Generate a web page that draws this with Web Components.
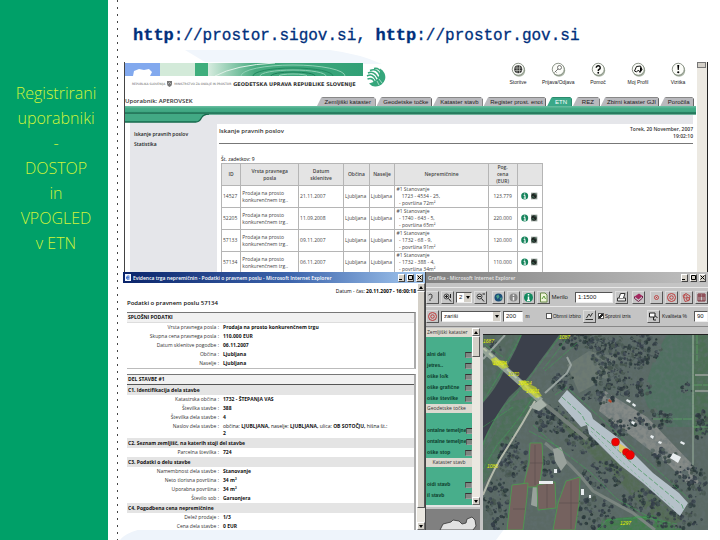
<!DOCTYPE html>
<html lang="sl">
<head>
<meta charset="utf-8">
<title>Prostor – dostop in vpogled v ETN</title>
<style>
body { margin: 0; background: #fff; font-family: "Open Sans", "Noto Sans", sans-serif; }
</style>
</head>
<body>
<slide-page>
  <side-note slot="side">
    <div>Registrirani</div><div>uporabniki</div><div>-</div><div>DOSTOP</div><div>in</div><div>VPOGLED</div><div>v ETN</div>
  </side-note>
  <url-title slot="title"><b>http</b>://prostor.sigov.si, <b>http</b>://prostor.gov.si</url-title>
  <portal-window slot="portal"></portal-window>
  <record-window slot="left"></record-window>
  <map-window slot="right"></map-window>
</slide-page>

<script>
const define = (name, html, after) => {
  const t = document.createElement('template');
  t.innerHTML = html;
  customElements.define(name, class extends HTMLElement {
    constructor() {
      super();
      this.attachShadow({ mode: 'open' }).append(t.content.cloneNode(true));
      if (after) after(this.shadowRoot, this);
    }
  });
};

define('slide-page', `
<style>
:host { display: grid; grid-template-columns: 15% 15px minmax(0, 1fr); min-height: 100vh; position: relative; overflow: hidden; box-sizing: border-box; }
.back { position: absolute; inset: 0; width: 100%; height: 100%; }
.side { background: #00a068; position: relative; }
.dots { position: relative; background: repeating-linear-gradient(to bottom, #444 0 2px, transparent 2px 7px) 9px 0 / 1px 100% no-repeat; }
main { position: relative; display: grid; height: 100vh; box-sizing: border-box; padding: 0 0 10px; grid-template-rows: 62px 210px minmax(0, 1fr); }
.row { display: grid; grid-template-columns: 303px minmax(0, 1fr); margin-right: 12px; min-height: 0; }
</style>
<svg class="back" viewBox="0 0 720 540" preserveAspectRatio="none" aria-hidden="true">
  <path d="M185 50 L330 50 Q360 54 382 64 L300 64 L205 62 Z" fill="#f1f6fc"/>
  <path d="M120 540 Q126 532 146 528 L505 528 L496 540 Z" fill="#eef4fb"/>
</svg>
<div class="side"><slot name="side"></slot></div>
<div class="dots"></div>
<main>
  <slot name="title"></slot>
  <slot name="portal"></slot>
  <div class="row"><slot name="left"></slot><slot name="right"></slot></div>
</main>`);

define('side-note', `
<style>
:host { display: block; padding: 81px 4px 0 8px; text-align: center; font: 300 16px/25px "Open Sans", sans-serif; color: #d0f53a; }
</style><slot></slot>`);

define('url-title', `
<style>
:host { display: block; padding: 25px 0 0 10px; font: 16px/22px "Liberation Mono", monospace; color: #00307c; white-space: nowrap; -webkit-text-stroke: 0.3px #00307c; }
::slotted(b) { font-size: 17px; }
</style><slot></slot>`);

/* ---------- portal ---------- */
define('nav-link', `
<style>
:host { display: block; width: 32px; }
a { display: grid; justify-items: center; gap: 2px; color: #222; text-decoration: none; font: 5px/7px "Liberation Sans", sans-serif; }
svg { width: 15px; height: 15px; }
</style>
<a href="#"><svg viewBox="0 0 30 30"><circle cx="16" cy="17" r="12.500" fill="#aab5a5"/><circle cx="14.500" cy="14.500" r="12" fill="#fbfcf8" stroke="#6a7465" stroke-width="1.500"/><g></g></svg><span><slot></slot></span></a>`,
(root, host) => {
  root.querySelector('g').innerHTML = {
    globe: '<circle cx="14.500" cy="14.500" r="8" fill="#333"/><path d="M8 12h13M8 17h13M12 7v15M17 7v15" stroke="#cdd2c8" stroke-width="1.200"/>',
    key: '<circle cx="17" cy="11" r="4" fill="none" stroke="#555" stroke-width="1.600"/><path d="M14 14L7 21M9 19l2 2" stroke="#555" stroke-width="1.600"/>',
    help: '<path d="M10.500 11.500a4 4 0 1 1 5.500 3.500q-1.500 .8-1.500 3" fill="none" stroke="#111" stroke-width="3"/><circle cx="14.500" cy="21.500" r="1.800"/>',
    profile: '<path d="M7 18l4-9 8-1 3 7-4 6-3-5-4 4z" fill="none" stroke="#111" stroke-width="2"/><path d="M18 9l4 6-4 5z"/>',
    alert: '<path d="M12.500 6h4l-1 10h-2z"/><circle cx="14.500" cy="20.500" r="2.200"/>'
  }[host.getAttribute('icon')];
});

define('portal-tab', `
<style>
:host { display: block; flex: var(--w) 1 0; min-width: 0; }
a { display: block; height: 9px; background: #b9b9bd; color: #222; clip-path: polygon(0 100%, 4px 1px, 6px 0, calc(100% - 2px) 0, 100% 2px, 100% 100%); text-align: center; text-decoration: none; font: 6px/9px "Liberation Sans", sans-serif; border-right: 1px solid #666; border-top: 1px solid #888; box-sizing: border-box; padding-left: 4px; white-space: nowrap; }
:host([current]) a { background: #3aa888; color: #fff; border-color: #2c8a6c; }
</style><a href="#"><slot></slot></a>`);

define('info-mark', `
<style>:host { display: inline-block; } svg { width: 17px; height: 8px; display: block; }</style>
<svg viewBox="0 0 51 24"><circle cx="11" cy="12" r="10.500" fill="#16845c"/><path d="M11 4.500v3M8 10h4v8M8 18.500h7" stroke="#fff" stroke-width="3" fill="none"/><path d="M30 2h19v20H30z" fill="#8d9a92"/><circle cx="39" cy="12" r="8" fill="#1d2421"/><path d="M32 16l5-3 3 5M40 6l5 3" stroke="#4c8a6c" stroke-width="2" fill="none"/></svg>`);

define('portal-window', `
<style>
:host { display: flex; margin: 0 12px 0 1px; border-left: 1px solid #444; border-right: 1px solid #222; overflow: hidden; min-height: 0; box-sizing: border-box; }
.page { flex: 1; min-width: 0; }
.bar { width: 10px; background: #ece9e2; }
.bar button { display: block; width: 9px; height: 6px; padding: 0; border: 1px solid #777; background: #d4d0c8; box-sizing: border-box; }
header { display: flex; height: 35px; padding-right: 3px; }
.mast { width: 241px; flex: none; }
.banner { display: block; padding-top: 1px; }
.agency { display: flex; align-items: center; gap: 2px; padding: 5px 0 0 7px; font: 3px/6px "DejaVu Sans", sans-serif; color: #666; white-space: nowrap; }
.agency b { font-size: 5px; color: #333; }
.nav { display: flex; gap: 8px; margin-left: auto; }
.user { display: flex; align-items: flex-end; height: 9px; font: 600 6px/10px "Open Sans", sans-serif; color: #333; }
.user span { width: 192px; flex: none; }
nav { display: flex; flex: 1; gap: 1px; margin-right: 3px; }
.green { height: 9px; margin-right: 1px; background: linear-gradient(#6cbfa3, #42a984 30%, #42a984 60%, #14694c 80%, #8fcab6); }
.body { display: grid; grid-template-columns: 87px minmax(0, 1fr); background: #e5e6ea; margin-right: 4px; border-left: 5px solid #fff; }
.menu { display: grid; align-content: start; padding: 14px 0 90px 4px; font: 600 5px/10px "Open Sans", sans-serif; }
.menu a { color: #222; text-decoration: none; }
.curve { position: absolute; width: 84px; height: 9px; margin: -1px 0 0 0; }
.content { background: #fff; margin-top: 9px; padding: 2px 0 0 2px; height: 150px; }
.head { display: flex; justify-content: space-between; height: 17px; border-bottom: 1px solid #777; font: 600 6px/11px "Open Sans", sans-serif; color: #333; }
.head time { text-align: right; font: 600 5px/7px "Open Sans", sans-serif; }
.count { font: 5px/7px "Open Sans", sans-serif; margin: 12px 0 0 2px; }
table { border-collapse: collapse; margin-left: 2px; table-layout: fixed; width: 68%; font: 5px/7px "Open Sans", sans-serif; color: #444; }
th, td { border: 1px solid #b5b5b5; padding: 0 1px; height: 21px; white-space: nowrap; overflow: hidden; }
th { background: #e4e4e4; font-weight: 600; }
td:nth-child(6) { white-space: pre; }
td:nth-child(7), td:nth-child(8) { text-align: center; }
</style>
<div class="page">
  <header>
    <div class="mast">
      <svg class="banner" viewBox="0 0 238 13" width="238" height="13">
        <defs><linearGradient id="g"><stop offset="0" stop-color="#d7ecdf"/><stop offset=".3" stop-color="#48ab80"/><stop offset="1" stop-color="#31a076"/></linearGradient></defs>
        <path d="M0 0h35v13H0z" fill="#82a9ee"/><path d="M8 13l1-5 5-2 5 1 5-1 3 3-2 4z" fill="#fff"/>
        <path d="M35 0h35v13H35z" fill="#d3ead9"/><path d="M70 0h13v13H70z" fill="#3fae7c"/><path d="M83 0h155v13H83z" fill="url(#g)"/>
        <g fill="none" stroke="#8fd0b4" stroke-width="1"><ellipse cx="168" cy="13" rx="52" ry="11"/><ellipse cx="168" cy="13" rx="40" ry="8" stroke="#22885f"/><ellipse cx="168" cy="13" rx="33" ry="6"/><ellipse cx="168" cy="13" rx="22" ry="4" stroke="#1c7e58"/><ellipse cx="168" cy="13" rx="14" ry="2"/><path d="M90 13Q110 2 150 0" stroke="#dff1e7"/></g>
      </svg>
      <div class="agency"><span>REPUBLIKA SLOVENIJA</span><svg width="5" height="6" viewBox="0 0 5 6"><path d="M0 0h5v3q0 2-2.500 3Q0 5 0 3z" fill="#777"/><path d="M1 3l1.500-1.500L4 3" stroke="#ddd" fill="none" stroke-width=".6"/></svg><span>MINISTRSTVO ZA OKOLJE IN PROSTOR</span><b>GEODETSKA UPRAVA REPUBLIKE SLOVENIJE</b></div>
    </div>
    <svg width="20" height="26" viewBox="0 0 20 26" aria-hidden="true"><path d="M14 6.500A9.500 9.500 0 0 1 9 24.500Q5 24 3 21.500 15 19 14 6.500z" fill="#35a67b"/><g fill="none" stroke="#35a67b" stroke-width="1.500"><path d="M2 11q6-3 10 5M1 14q6-3 9 4M1.500 17q5-2 7 3M4 8.500q7-3 10 5M8 6.500q5-1 8 5"/></g><g fill="none" stroke="#d9efe5" stroke-width=".7"><path d="M13 17l3 4M11 19l2 4"/></g></svg>
    <div class="nav"><nav-link icon="globe">Storitve</nav-link><nav-link icon="key">Prijava/Odjava</nav-link><nav-link icon="help">Pomoč</nav-link><nav-link icon="profile">Moj Profil</nav-link><nav-link icon="alert">Vizitka</nav-link></div>
  </header>
  <div class="user"><span>Uporabnik: APEROVSEK</span>
    <nav>
      <portal-tab style="--w:59">Zemljiški kataster</portal-tab><portal-tab style="--w:56">Geodetske točke</portal-tab><portal-tab style="--w:50">Kataster stavb</portal-tab><portal-tab style="--w:63">Register prost. enot</portal-tab><portal-tab current style="--w:25">ETN</portal-tab><portal-tab style="--w:27">REZ</portal-tab><portal-tab style="--w:59">Zbirni kataster GJI</portal-tab><portal-tab style="--w:34">Poročila</portal-tab>
    </nav>
  </div>
  <div class="green"></div>
  <svg class="curve" viewBox="0 0 88 9" preserveAspectRatio="none" aria-hidden="true"><path d="M0 0H88Q82 0 80 4 78 8 74 8H0z" fill="#42a984"/><path d="M0 8H74Q78 8 80 4 82 0 88 0" fill="none" stroke="#14694c" stroke-width="1.300"/></svg>
  <div class="body">
    <div class="menu"><a href="#">Iskanje pravnih poslov</a><a href="#">Statistika</a></div>
    <div class="content">
      <div class="head"><span>Iskanje pravnih poslov</span><time>Torek, 20 November, 2007<br>19:02:10</time></div>
      <div class="count">Št. zadetkov: 9</div>
      <table>
        <colgroup><col style="width:6%"><col style="width:18%"><col style="width:14%"><col style="width:8%"><col style="width:8%"><col style="width:29%"><col style="width:9%"><col style="width:8%"></colgroup>
        <thead><tr><th>ID</th><th>Vrsta pravnega<br>posla</th><th>Datum<br>sklenitve</th><th>Občina</th><th>Naselje</th><th>Nepremičnine</th><th>Pog.<br>cena<br>(EUR)</th><th></th></tr></thead>
        <tbody></tbody>
      </table>
    </div>
  </div>
</div>
<div class="bar"><button aria-label="Gor"></button></div>`,
root => {
  root.querySelector('tbody').innerHTML = [
    ['14527', '21.11.2007', '    1723 - 4534 - 25,', 72, '123.779'],
    ['52205', '11.09.2008', '  - 1740 - 643 - 5,', 65, '220.000'],
    ['57133', '09.11.2007', '  - 1732 - 68 - 9,', 91, '120.000'],
    ['57134', '06.11.2007', '  - 1732 - 388 - 4,', 34, '110.000']
  ].map(r => `<tr><td>${r[0]}</td><td>Prodaja na prosto<br>konkurenčnem trg..</td><td>${r[1]}</td><td>Ljubljana</td><td>Ljubljana</td><td>#1 Stanovanje\n${r[2]}\n  - površina ${r[3]}m²</td><td>${r[4]}</td><td><info-mark></info-mark></td></tr>`).join('');
});

/* ---------- window frame ---------- */
define('window-frame', `
<style>
:host { display: flex; flex-direction: column; min-height: 0; height: 100%; overflow: hidden; box-sizing: border-box; }
.title { display: flex; align-items: center; gap: 2px; height: 11px; padding: 0 2px; background: var(--bar); color: var(--ink, #fff); font: 600 5px/10px "Open Sans", sans-serif; box-sizing: border-box; flex: none; white-space: nowrap; }
.title span { flex: 1; }
button { width: 7px; height: 8px; padding: 0; border: 1px solid; border-color: #fff #444 #444 #fff; background: #d4d0c8; display: grid; place-items: center; box-sizing: border-box; }
button svg { width: 5px; height: 5px; }
.icon { width: 6px; height: 7px; flex: none; }
:host([plain]) .icon { display: none; }
</style>
<div class="title"><svg class="icon" viewBox="0 0 6 7"><path d="M0 0h6v7H0z" fill="#f4f7ff"/><path d="M4.500 2.200Q2 1 1.500 3.500T4.500 5M1.500 3.700h3" stroke="#2861c8" fill="none"/></svg><span><slot name="title"></slot></span>
<button aria-label="Pomanjšaj"><svg viewBox="0 0 5 5"><path d="M0 4.500h3" stroke="#000"/></svg></button><button aria-label="Povečaj"><svg viewBox="0 0 5 5"><path d="M.5.500h4v4h-4z" fill="none" stroke="#000"/></svg></button><button aria-label="Zapri"><svg viewBox="0 0 5 5"><path d="M.5.500l4 4M4.500.500l-4 4" stroke="#000"/></svg></button></div>
<slot></slot>`);

define('scroll-track', `
<style>
:host { display: flex; flex-direction: column; width: 8px; flex: none; background: #ebe8e1; }
button { height: 8px; padding: 0; border: 1px solid; border-color: #fff #666 #666 #fff; background: #d4d0c8; display: grid; place-items: center; flex: none; box-sizing: border-box; }
svg { width: 4px; height: 3px; }
.thumb { flex: 0 0 var(--thumb, 88%); background: #d4d0c8; border: 1px solid; border-color: #fff #555 #555 #fff; box-sizing: border-box; }
.gap { flex: 1; }
</style>
<button aria-label="Gor"><svg viewBox="0 0 4 3"><path d="M0 3L2 0l2 3z"/></svg></button><div class="thumb"></div><div class="gap"></div><button aria-label="Dol"><svg viewBox="0 0 4 3"><path d="M0 0l2 3 2-3z"/></svg></button>`);

/* ---------- record pop-up ---------- */
define('record-line', `
<style>
:host { display: grid; grid-template-columns: 92px minmax(0, 1fr); gap: 4px; font: 5px/7px "Open Sans", sans-serif; color: #333; padding: 1px 0; }
.l { text-align: right; } .v { font-weight: 700; color: #111; }
</style><span class="l"><slot name="label"></slot> :</span><span class="v"><slot></slot></span>`);

define('record-band', `
<style>
:host { display: block; background: #e4e4e4; padding: 1px; font: 700 5px/8px "Open Sans", sans-serif; color: #111; }
:host([top]) { background: #f1f1f1; border-bottom: 1px solid var(--rule, #ddd); line-height: 7px; }
</style><slot></slot>`);

define('record-window', `
<style>
:host { display: block; min-height: 0; background: #fff; }
window-frame { --bar: linear-gradient(to right, #0a246a, #3c64ac 55%, #a6caf0); border-right: 1px solid #444; }
.wrap { display: flex; flex: 1; min-height: 0; }
.doc { flex: 1; min-width: 0; padding: 5px 1px 0 4px; overflow: hidden; }
.date { text-align: right; font: 5px/7px "Open Sans", sans-serif; }
h1 { margin: 4px 0; font: 600 6px/9px "Open Sans", sans-serif; color: #111; }
section { border-top: 1px solid #777; border-right: 2px solid #aaa; }
section:first-of-type { border-bottom: 1px solid #bbb; margin-bottom: 5px; }
i { font-style: normal; font-weight: 400; }
</style>
<window-frame><span slot="title">Evidenca trga nepremičnin - Podatki o pravnem poslu - Microsoft Internet Explorer</span>
<div class="wrap"><div class="doc">
  <div class="date">Datum - čas: <b>20.11.2007 - 16:00:18</b></div>
  <h1>Podatki o pravnem poslu 57134</h1>
  <section>
    <record-band top>SPLOŠNI PODATKI</record-band>
    <record-line><span slot="label">Vrsta pravnega posla</span>Prodaja na prosto konkurenčnem trgu</record-line>
    <record-line><span slot="label">Skupna cena pravnega posla</span>110.000 EUR</record-line>
    <record-line><span slot="label">Datum sklenitve pogodbe</span>06.11.2007</record-line>
    <record-line><span slot="label">Občina</span>Ljubljana</record-line>
    <record-line><span slot="label">Naselje</span>Ljubljana</record-line>
  </section>
  <section>
    <record-band top style="--rule:#555">DEL STAVBE #1</record-band>
    <record-band>C1. Identifikacija dela stavbe</record-band>
    <record-line><span slot="label">Katastrska občina</span>1732 - ŠTEPANJA VAS</record-line>
    <record-line><span slot="label">Številka stavbe</span>388</record-line>
    <record-line><span slot="label">Številka dela stavbe</span>4</record-line>
    <record-line><span slot="label">Naslov dela stavbe</span><i>občina:</i> LJUBLJANA, <i>naselje:</i> LJUBLJANA, <i>ulica:</i> OB SOTOČJU, <i>hišna št.:</i><br>2</record-line>
    <record-band>C2. Seznam zemljišč, na katerih stoji del stavbe</record-band>
    <record-line><span slot="label">Parcelna številka</span>724</record-line>
    <record-band>C3. Podatki o delu stavbe</record-band>
    <record-line><span slot="label">Namembnost dela stavbe</span>Stanovanje</record-line>
    <record-line><span slot="label">Neto tlorisna površina</span>34 m²</record-line>
    <record-line><span slot="label">Uporabna površina</span>34 m²</record-line>
    <record-line><span slot="label">Število sob</span>Garsonjera</record-line>
    <record-band>C4. Pogodbena cena nepremičnine</record-band>
    <record-line><span slot="label">Delež prodaje</span>1/3</record-line>
    <record-line><span slot="label">Cena dela stavbe</span>0 EUR</record-line>
  </section>
</div><scroll-track></scroll-track></div>
</window-frame>`);

/* ---------- map window ---------- */
define('tool-button', `
<style>
:host { display: block; flex: none; }
button { width: 13px; height: 13px; padding: 0; border: 1px solid; border-color: #dcdcdc #555 #555 #dcdcdc; background: #c6c6c6; display: grid; place-items: center; box-sizing: border-box; }
svg { width: 11px; height: 11px; }
</style><button><svg viewBox="0 0 22 22" fill="none" stroke-width="2"></svg></button>`,
(root, host) => {
  const k = host.getAttribute('icon');
  root.querySelector('button').setAttribute('aria-label', k);
  root.querySelector('svg').innerHTML = {
    zoomin: '<circle cx="9" cy="9" r="5" stroke="#444"/><path d="M13 13l5 6M9 6v6M6 9h6M17 4v8" stroke="#222"/>',
    zoomout: '<circle cx="9" cy="9" r="5" stroke="#444"/><path d="M13 13l5 6M6 9h6M15 4h5" stroke="#222"/>',
    world: '<circle cx="11" cy="11" r="8" fill="#1c4f7a"/><path d="M6 8l5-3 2 5-4 4zM13 12l5-1-2 6z" fill="#4aa08a"/>',
    infoGrey: '<circle cx="11" cy="11" r="8" fill="#868686"/><path d="M11 5v3M11 10v7" stroke="#eee" stroke-width="3"/>',
    info: '<circle cx="11" cy="11" r="9" fill="#128a5f"/><path d="M11 4v3M11 9v8M8 17h6" stroke="#fff" stroke-width="3"/>',
    page: '<path d="M5 2h9l4 4v14H5z" fill="#eef5d8" stroke="#6c8c4a"/><path d="M8 14l4-6 3 6" stroke="#5a9a3a"/>',
    print: '<path d="M3 12h16v6H3z" fill="#eee" stroke="#333"/><path d="M6 12l3-9h9l-3 9" fill="#fff" stroke="#333"/>',
    book: '<path d="M3 9l9-6 7 5-8 7z" fill="#a3285f"/><path d="M3 9v4l8 6 8-7V8" stroke="#74204a"/>',
    dot: '<circle cx="11" cy="11" r="4" stroke="#c04848"/><circle cx="11" cy="11" r="1" fill="#c00"/>',
    target: '<circle cx="11" cy="11" r="8" stroke="#c03a3a"/><circle cx="11" cy="11" r="3.500" stroke="#c03a3a"/>',
    lasso: '<path d="M4 7l6-4 8 5-2 9-8 2z" stroke="#b94b4b"/><circle cx="9" cy="9" r="3" stroke="#b94b4b"/><circle cx="14" cy="14" r="3" stroke="#b94b4b"/>',
    frame: '<path d="M4 4h14v14H4zM4 8h14M8 4v14M14 4v14" stroke="#7d2c36"/>',
    measure: '<path d="M3 17h15M5 14l5-8 3 5 4-7" stroke="#333"/>',
    apply: '<path d="M3 4h11v8H3z" fill="#fff" stroke="#222"/><path d="M11 12v6h5M14 9l5 5" stroke="#222"/>',
    hand: '<path d="M3 6q6-4 7 1t-4 8v3" stroke="#333"/>'
  }[k];
});

define('layer-group', `
<style>
:host { display: block; background: #48ae8b; font: 700 5px/11px "Liberation Sans", sans-serif; color: #0c3a2a; }
h2 { margin: 0; padding: 0 1px; background: #dcd9d0; color: #333; font: 5px/9px "Open Sans", sans-serif; white-space: nowrap; text-align: var(--align, left); }
.rows { padding: 12px 0 0 1px; }
label { display: flex; justify-content: space-between; align-items: center; white-space: nowrap; }
input { appearance: none; margin: 0; width: 7px; height: 6px; background: #7d8782; border: 1px solid; border-color: #333 #999 #999 #555; box-sizing: border-box; flex: none; }
</style><h2></h2><div class="rows"></div>`,
(root, host) => {
  root.querySelector('h2').textContent = host.getAttribute('heading');
  root.querySelector('.rows').innerHTML = host.getAttribute('items').split('|').map(t => `<label><span>${t}</span><input type="checkbox"></label>`).join('');
});

define('aerial-map', `
<style>
:host { display: block; min-width: 0; min-height: 0; overflow: hidden; border-top: 1px solid #222; }
svg { display: block; width: 100%; height: 100%; }
text { font: italic 5px "Liberation Sans", sans-serif; fill: #e8f000; }
</style>
<svg viewBox="0 0 225 195" preserveAspectRatio="xMinYMin slice" role="img" aria-label="Letalski posnetek">
  <defs>
    <filter id="n" x="0" y="0" width="100%" height="100%"><feTurbulence type="fractalNoise" baseFrequency=".22" numOctaves="3" seed="4"/><feColorMatrix values="0 0 0 0 .12  0 0 0 0 .16  0 0 0 0 .17  1.300 0 0 0 -.5"/></filter>
    <filter id="s"><feGaussianBlur stdDeviation=".5"/></filter>
  </defs>
  <path d="M0 0h225v195H0z" fill="#5a6964"/>
  <path d="M0 0H80L60 22 30 66 0 118z" fill="#4f6e5c"/>
  <path d="M0 0H34L16 34 0 50z" fill="#55695f"/>
  <path d="M56 60Q40 88 26 110 10 134 0 150V120L30 66z" fill="#4c6f58"/>
  <path d="M160 60L172 20 184 0H210V92H184L165 72z" fill="#4f7060"/>
  <path d="M211 0h14v100h-14z" fill="#4c6f54"/>
  <path d="M84 30l22-14 28 6-8 20-30 16z" fill="#6d7a72"/>
  <path d="M122 56l42 26 44 46 8 20-10 2-20-20-70-54z" fill="#858a87"/>
  <path d="M75 74l125 112-20 6-100-100z" fill="#536a54"/>
  <path d="M120 184l50-4 30 15H114z" fill="#437c4c"/>
  <g id="trees" filter="url(#s)"></g>
  <path d="M0 0h225v195H0z" filter="url(#n)"/>
  <path d="M39 0H76Q66 14 56 27 44 46 26 62 10 84 0 106V68Q14 52 20 38 32 18 39 0z" fill="#3b404b"/>
  <path d="M22 0L0 24M62 58L84 38 88 30 84 22" stroke="#98a39f" stroke-width="2" fill="none"/>
  <path d="M58 66Q80 84 104 104" stroke="#747e79" stroke-width="4" fill="none"/>
  <path d="M0 14L58 66" stroke="#93a296" stroke-width="6"/>
  <path d="M0 13L56 63" stroke="#b8c4a8" stroke-width="2" stroke-dasharray="5 3"/>
  <path d="M52 66Q40 88 26 110 10 134 0 160" stroke="#b5baac" stroke-width="2" fill="none"/>
  <path d="M46 72l12-8 6 6-8 6z" fill="#a9b3aa"/>
  <path d="M62 108Q90 130 110 156L150 178 172 195" stroke="#7b8580" stroke-width="3" fill="none"/>
  <path d="M70 114l8-2 6 16-6 8-6-10zM50 150h6l-2 22-6-2z" fill="#98a19b"/>
  <g stroke="#3ea653" stroke-width=".6" fill="none" stroke-dasharray="9 1" opacity=".85">
    <path d="M38 0Q28 22 0 66M78 0Q62 22 50 38 34 60 22 70 8 88 0 110M86 0Q72 20 60 34M50 62Q34 88 14 110L0 134M94 8L62 36M50 90L74 112 106 136 134 164 180 190M46 96l30 16M0 92L30 72M0 8l20 14M134 195l20-14 40 8M114 195l10-10 40-3"/>
    <path d="M86 54L206 164M72 60L84 52"/>
    <path d="M210 0V92H225M210 50H225M170 84H210M214 0v26" stroke="#62c06a"/>
  </g>
  <g fill="#75625f" stroke="#46a94c" stroke-width=".7">
    <path d="M47 108H59L60 128 56 152H40L46 128z"/><path d="M29 150l16-2-1 14-4 33H24z"/><path d="M54 150l18-3 1 26-18 2z"/><path d="M83 146l14-4-1 26-4 27H70L75 168z"/>
  </g>
  <g stroke="#584a4a" stroke-width=".7" opacity=".8"><path d="M47 128h13M52 110v40M30 174h12M64 149v24M76 168h20M88 146v48"/></g>
  <path d="M84 55L75 66 98 92 104 90 106 99 137 130 160 148 197 181 205 168 196 158 170 138 134 102 110 84 108 78z" fill="#b5c1c9"/>
  <path d="M79 62l20 18 4 8 24 20 26 24 46 38 2 6" stroke="#4c9a63" stroke-width=".8" fill="none" stroke-dasharray="5 2"/>
  <path d="M108 96l28 28 56 50" stroke="#74b58a" stroke-width=".6" fill="none" stroke-dasharray="3 2"/>
  <path d="M210 0V130" stroke="#91a695" stroke-width="2" opacity=".6"/>
  <path d="M212 40h13M212 56h13" stroke="#9aa39c" stroke-width="1.500"/>
  <g fill="#e9eef0"><path d="M144 64l4 2-1 2-4-2zM150 68l3 2-1 2-3-2zM149 86l3 1-1 3-3-2zM168 100l3 1-1 3-3-2zM176 106l3 1-1 2-3-1zM190 118l8 4-3 6-8-5zM198 106l4 2-1 2-4-2zM71 134h3v4h-3zM56 146h14v3H56zM98 154h3v6h-3zM106 160h2v3h-2z"/></g>
  <path d="M126 64l3 2-1 2-3-2z" fill="#b7492f"/>
  <path d="M8 24l5-2 3 3 6 1 4 6-6 2-5-3-5-1zM36 46l6-1 4 4 7 3 6 9-6 2-7-6-6-2z" fill="#d4e020" opacity=".6"/>
  <text x="0" y="8">1687</text><text x="10" y="30">10804</text><text x="25" y="41">1070</text><text x="35" y="50">10824</text><text x="43" y="58">10911</text><text x="76" y="4">1087</text><text x="4" y="133">1086</text><text x="137" y="190">1297</text>
  <path d="M136 108l12 8-3 6-9-6z" fill="#e6c84a" opacity=".8"/>
  <g fill="#f00000" stroke="#9c1a10" stroke-width=".5"><circle cx="132.500" cy="107" r="4"/><circle cx="143" cy="117" r="3.500"/><circle cx="147" cy="120" r="4.500"/></g>
</svg>`,
root => {
  let s = 7;
  const rnd = () => (s = (s * 16807) % 2147483647) / 2147483647;
  const zones = [[104,8,30,9,110],[138,20,30,18,200],[160,14,18,16,80],[124,44,14,10,50],[148,52,24,10,80],[116,62,16,8,40],[168,84,22,10,60],[205,54,6,7,16],[218,90,7,16,40],[134,92,16,10,40],[178,122,16,8,40],[206,150,18,22,110],[80,48,12,10,50],[70,84,22,14,100],[98,106,16,12,60],[30,124,14,24,110],[14,168,12,26,90],[120,140,20,14,70],[112,178,24,16,80],[66,130,14,12,50],[160,166,22,12,80],[8,14,10,8,20],[190,184,30,10,70]];
  let out = '';
  for (const [x, y, rx, ry, n] of zones) for (let i = 0; i < n; i++) {
    const a = rnd() * 6.283, r = Math.sqrt(rnd());
    out += `<circle cx="${(x + rx * r * Math.cos(a)).toFixed(1)}" cy="${(y + ry * r * Math.sin(a)).toFixed(1)}" r="${(0.6 + rnd() * 1.8).toFixed(1)}" fill="${['#2f3a40', '#363f4a', '#2c3a3a', '#46564f', '#5b6a66'][Math.floor(rnd() * 5)]}"/>`;
  }
  root.querySelector('#trees').innerHTML = out;
});

define('map-window', `
<style>
:host { display: block; min-width: 0; min-height: 0; background: #c4c4c4; }
window-frame { --bar: linear-gradient(to right, #808080, #c0c0c0); --ink: #e6e6e6; }
.tools { display: flex; align-items: center; height: 19px; flex: none; gap: 2px; overflow: hidden; border-top: 1px solid #e8e8e8; box-sizing: border-box; font: 5px/8px "Liberation Sans", sans-serif; color: #222; white-space: nowrap; }
.first { margin-top: 4px; }
.sp { flex: 1; }
.cap { margin-right: 6px; }
.wide { font-size: 6px; }
input:not([type=checkbox]), select { font: 6px/9px "Liberation Sans", sans-serif; height: 11px; padding: 0 2px; border: 1px solid; border-color: #555 #eee #eee #555; background: #fff; box-sizing: border-box; border-radius: 0; color: #222; }
select { appearance: none; background: linear-gradient(#d4d0c8, #d4d0c8) right / 7px 100% no-repeat, #fff; }
.drop { display: flex; position: relative; }
.drop svg { position: absolute; right: 2px; top: 4px; width: 4px; height: 3px; }
input[type=checkbox] { appearance: none; width: 6px; height: 6px; margin: 0; border: 1px solid #555; background: #fff; box-sizing: border-box; }
input[type=checkbox]:checked { background: linear-gradient(135deg, #fff 35%, #222 35% 65%, #fff 65%); }
label { display: flex; align-items: center; gap: 1px; }
.wrap { display: grid; grid-template-columns: 54px minmax(0, 1fr); gap: 3px; flex: 1; min-height: 0; border-top: 1px solid #888; margin-top: 1px; padding-top: 1px; }
.left { display: flex; flex-direction: column; min-height: 0; }
.list { display: flex; flex: 1; min-height: 0; overflow: hidden; border-bottom: 2px solid #e4e4e4; }
.groups { flex: 1; min-width: 0; background: #48ae8b; }
.over { flex: none; height: 21px; margin-top: 2px; background: #808080; }
.over svg { display: block; width: 100%; height: 100%; }
aerial-map { margin-top: 6px; }
</style>
<window-frame plain><span slot="title">Grafika - Microsoft Internet Explorer</span>
<div class="tools first"><tool-button icon="hand"></tool-button><tool-button icon="zoomin"></tool-button><span class="drop"><select aria-label="Korak" style="width:16px"><option>2</option></select><svg viewBox="0 0 4 3"><path d="M0 0l2 3 2-3z"/></svg></span><tool-button icon="zoomout"></tool-button><div class="sp"></div><tool-button icon="world"></tool-button><tool-button icon="infoGrey"></tool-button><tool-button icon="info"></tool-button><tool-button icon="page"></tool-button><label class="wide"><span class="cap">Merilo</span><input value="1:1500" style="width:38px"></label><tool-button icon="print"></tool-button><div class="sp"></div><tool-button icon="book"></tool-button><div class="sp"></div><tool-button icon="dot"></tool-button><tool-button icon="target"></tool-button><tool-button icon="lasso"></tool-button><tool-button icon="frame"></tool-button></div>
<div class="tools"><tool-button icon="target"></tool-button><span class="drop"><select aria-label="Način" style="width:60px"><option>zariši</option></select><svg viewBox="0 0 4 3"><path d="M0 0l2 3 2-3z"/></svg></span><label><input value="200" style="width:20px" aria-label="Razdalja">&nbsp;m</label><div class="sp"></div><label><input type="checkbox">Obmni izbiro</label><tool-button icon="measure"></tool-button><label><input type="checkbox" checked>Sprotni izris</label><div class="sp"></div><tool-button icon="apply"></tool-button><label><span class="cap">Kvaliteta %</span><input value="90" style="width:14px"></label></div>
<div class="wrap">
  <div class="left"><div class="list"><div class="groups">
    <layer-group heading="Zemljiški kataster" items="alni deli|jetres..|oške lo/k|oške grafične|oške številke"></layer-group>
    <layer-group heading="Geodetske točke" items="ontalne temeljne|ontalne temeljne|oške stop"></layer-group>
    <layer-group style="--align:center" heading="Kataster stavb" items="oidi stavb|il stavb"></layer-group>
  </div><scroll-track style="--thumb:12%"></scroll-track></div>
  <div class="over"><svg viewBox="0 0 54 21"><path d="M14 21l3-6 8-2 2-2 6 1 3 3 4-1 1-4 5-2 3 3 1 6-3 4z" fill="#e2e2e2" stroke="#333" stroke-width=".8"/></svg></div></div>
  <aerial-map></aerial-map>
</div>
</window-frame>`);
</script>
</body>
</html>
